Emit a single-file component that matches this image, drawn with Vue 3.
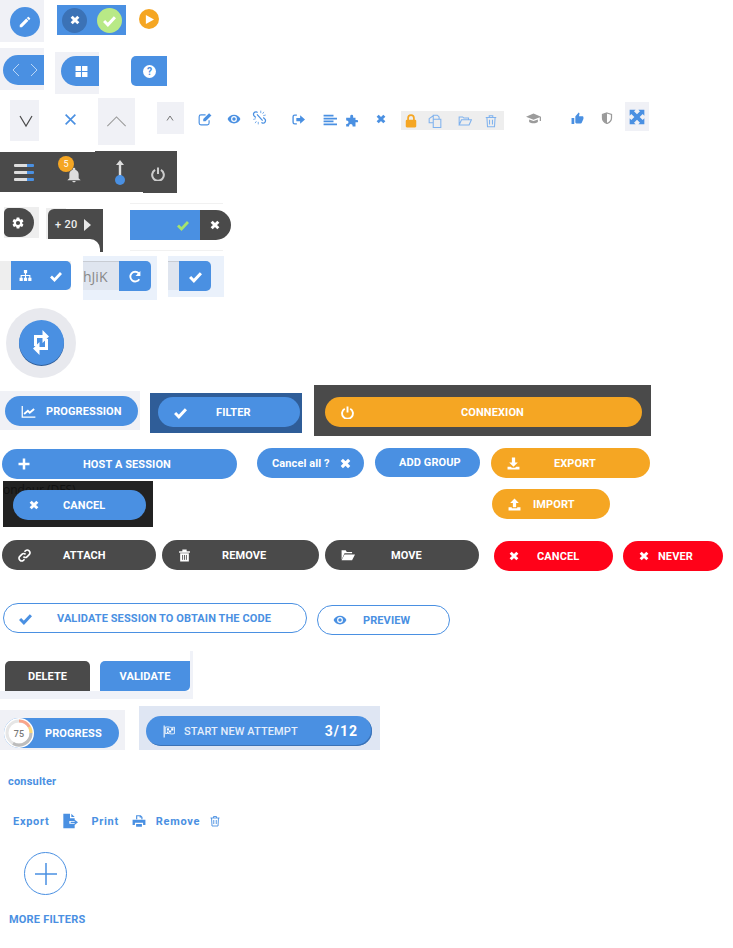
<script setup>
</script>

<template>
  <div class="page">
    <svg class="sprite" aria-hidden="true">
      <symbol id="pencil" viewBox="0 0 24 24"><path d="M3 17.25V21h3.75L17.81 9.94l-3.75-3.75L3 17.25zM20.71 7.04a1 1 0 000-1.41l-2.34-2.34a1 1 0 00-1.41 0l-1.83 1.83 3.75 3.75 1.83-1.83z"/></symbol>
      <symbol id="times" viewBox="0 0 24 24"><path d="M4 4l16 16M20 4L4 20" fill="none" stroke="currentColor" stroke-width="7"/></symbol>
      <symbol id="thin-x" viewBox="0 0 24 24"><path d="M3 3l18 18M21 3L3 21" fill="none" stroke="currentColor" stroke-width="3"/></symbol>
      <symbol id="check" viewBox="0 0 24 24"><path d="M2 13l7 7L22 6" fill="none" stroke="currentColor" stroke-width="5.5"/></symbol>
      <symbol id="plus" viewBox="0 0 24 24"><path d="M9.5 1h5v8.5H23v5h-8.5V23h-5v-8.5H1v-5h8.5z"/></symbol>
      <symbol id="grid" viewBox="0 0 24 24"><path d="M1 2h10v9H1zM13 2h10v9H13zM1 13h10v9H1zM13 13h10v9H13z"/></symbol>
      <symbol id="edit" viewBox="0 0 24 24"><path d="M19 14v5a3 3 0 01-3 3H5a3 3 0 01-3-3V8a3 3 0 013-3h8" fill="none" stroke="currentColor" stroke-width="2"/><path d="M9 12v4h4L23 6l-4-4z"/></symbol>
      <symbol id="eye" viewBox="0 0 24 24"><path d="M12 4.5C7 4.5 2.73 7.61 1 12c1.73 4.39 6 7.5 11 7.5s9.27-3.11 11-7.5c-1.73-4.39-6-7.5-11-7.5zM12 17a5 5 0 110-10 5 5 0 010 10zm0-8a3 3 0 100 6 3 3 0 000-6z"/></symbol>
      <symbol id="unlink" viewBox="0 0 24 24"><path d="M9 4l-2-1a4 4 0 00-4 6l3 3M15 20l2 1a4 4 0 004-6l-3-3M8 7l9 10" fill="none" stroke="currentColor" stroke-width="2"/><path d="M14 1v4M19 3l-2 3M22 8l-4 1M2 15l4-1M5 21l2-3M10 23v-4" fill="none" stroke="currentColor" stroke-width="1.2"/></symbol>
      <symbol id="signout" viewBox="0 0 24 24"><path d="M9 4H5a3 3 0 00-3 3v10a3 3 0 003 3h4" fill="none" stroke="currentColor" stroke-width="2.5"/><path d="M8 9h7V4l9 8-9 8v-5H8z"/></symbol>
      <symbol id="align" viewBox="0 0 24 24"><path d="M1 3h17v3H1zM1 8h23v3H1zM1 13h17v3H1zM1 18h23v3H1z"/></symbol>
      <symbol id="puzzle" viewBox="0 0 24 24"><path d="M20.5 12H18V8h-4V5.5a2.5 2.5 0 00-5 0V8H2v5h1a3 3 0 010 6H2v4h5v-1a3 3 0 016 0v1h5v-7h2.5a2 2 0 000-4z"/></symbol>
      <symbol id="lock" viewBox="0 0 24 24"><path d="M7 11V7a5 5 0 0110 0v4" fill="none" stroke="currentColor" stroke-width="3"/><rect x="3" y="10" width="18" height="13" rx="2"/></symbol>
      <symbol id="files" viewBox="0 0 24 24"><path d="M9 7V2h7l3 3v3M2 8l7-5v12H2zM9 9h13v14H9z" fill="none" stroke="currentColor" stroke-width="1.8"/></symbol>
      <symbol id="folder" viewBox="0 0 24 24"><path d="M2 19V5h6l2 2h8v3M2 19l4-9h17l-4 9z" fill="none" stroke="currentColor" stroke-width="1.8"/></symbol>
      <symbol id="trash" viewBox="0 0 24 24"><path d="M3 6h18M9 6V3h6v3M5 6l1 16h12l1-16M9.5 10v8M14.5 10v8" fill="none" stroke="currentColor" stroke-width="1.8"/></symbol>
      <symbol id="cap" viewBox="0 0 24 24"><path d="M12 4L0 9l12 5 10-4v6h2V9zM5 13.5v4c3 3 11 3 14 0v-4L12 16z"/></symbol>
      <symbol id="thumb" viewBox="0 0 24 24"><path d="M1 11h5v11H1zm22-1c0-1.100-.9-2-2-2h-6.310l.95-4.570.03-.32c0-.41-.17-.79-.44-1.060L14.170 1 8.590 7.590C8.220 7.950 8 8.450 8 9v10c0 1.100.9 2 2 2h8c.83 0 1.540-.5 1.840-1.220l3.020-7.050c.09-.23.14-.47.14-.73v-2z"/></symbol>
      <symbol id="shield" viewBox="0 0 24 24"><path d="M12 2l9 3v7c0 5-4 9-9 11-5-2-9-6-9-11V5z" fill="none" stroke="currentColor" stroke-width="2.5"/><path d="M12 2v21c-5-2-9-6-9-11V5z"/></symbol>
      <symbol id="expand" viewBox="0 0 24 24"><path d="M1 1h9L7.5 3.5 12 8l4.500-4.500L14 1h9v9l-2.500-2.500L16 12l4.500 4.500L23 14v9h-9l2.500-2.500L12 16l-4.500 4.500L10 23H1v-9l2.500 2.500L8 12 3.500 7.500 1 10z"/></symbol>
      <symbol id="bell" viewBox="0 0 24 24"><path d="M12 23c1.400 0 2.500-1 2.500-2h-5c0 1 1.100 2 2.500 2zm7-6v-6c0-3.500-2-6-5-7V3a2 2 0 00-4 0v1c-3 1-5 3.500-5 7v6l-3 3h20z"/></symbol>
      <symbol id="power" viewBox="0 0 24 24"><path d="M7 5a10 10 0 1010 0M12 1v11" fill="none" stroke="currentColor" stroke-width="3.5"/></symbol>
      <symbol id="gear" viewBox="0 0 24 24"><path d="M19.14 12.94c.04-.3.06-.61.06-.94 0-.32-.02-.64-.07-.94l2.03-1.58a.49.49 0 00.12-.61l-1.92-3.32a.488.488 0 00-.59-.22l-2.39.96c-.5-.38-1.03-.7-1.62-.94l-.36-2.54a.484.484 0 00-.48-.41h-3.84c-.24 0-.43.17-.47.41l-.36 2.54c-.59.24-1.13.57-1.62.94l-2.39-.96c-.22-.08-.47 0-.59.22L2.74 8.87c-.12.21-.08.47.12.61l2.03 1.58c-.05.3-.09.63-.09.94s.02.64.07.94l-2.03 1.58a.49.49 0 00-.12.61l1.92 3.32c.12.22.37.29.59.22l2.39-.96c.5.38 1.03.7 1.62.94l.36 2.54c.05.24.24.41.48.41h3.84c.24 0 .44-.17.47-.41l.36-2.54c.59-.24 1.13-.56 1.62-.94l2.39.96c.22.08.47 0 .59-.22l1.92-3.32c.12-.22.07-.47-.12-.61l-2.01-1.58zM12 15.6A3.6 3.6 0 1112 8.4a3.6 3.6 0 010 7.2z"/></symbol>
      <symbol id="sitemap" viewBox="0 0 24 24"><path d="M9 2h6v6H9zM1 16h6v6H1zM9 16h6v6H9zM17 16h6v6h-6zM11 8h2v3h8v5h-2v-3h-6v3h-2v-3H5v3H3v-5h8z"/></symbol>
      <symbol id="refresh" viewBox="0 0 24 24"><path d="M19 17a9 9 0 11-1-11" fill="none" stroke="currentColor" stroke-width="3.5"/><path d="M21 2v9h-9z"/></symbol>
      <symbol id="retweet" viewBox="0 0 16 25"><path d="M2.5 16V6.500H10M13.500 9v9.500H6" fill="none" stroke="currentColor" stroke-width="3"/><path d="M9.500 0L16 6.500 9.500 13zM6.500 12L0 18.500 6.500 25z"/></symbol>
      <symbol id="chart" viewBox="0 0 24 24"><path d="M2 3v18h21" fill="none" stroke="currentColor" stroke-width="2"/><path d="M5 16l6-5 3 3 7-6" fill="none" stroke="currentColor" stroke-width="3"/></symbol>
      <symbol id="download" viewBox="0 0 24 24"><path d="M9 1h6v9h5l-8 8-8-8h5zM1 18h6l2 2h6l2-2h6v5H1z"/></symbol>
      <symbol id="upload" viewBox="0 0 24 24"><path d="M12 1l8 8h-5v8H9V9H4zM1 17h6v2h10v-2h6v6H1z"/></symbol>
      <symbol id="link" viewBox="0 0 24 24"><path d="M10 14a5 5 0 007 0l4-4a5 5 0 00-7-7l-2 2M14 10a5 5 0 00-7 0l-4 4a5 5 0 007 7l2-2" fill="none" stroke="currentColor" stroke-width="3"/></symbol>
      <symbol id="trash-fill" viewBox="0 0 24 24"><path d="M2 4h6V1h8v3h6v3H2zM4 8h16v15H4z"/><path d="M8.500 11v9M12 11v9M15.500 11v9" stroke="#4a4a4a" stroke-width="1.6"/></symbol>
      <symbol id="folder-fill" viewBox="0 0 24 24"><path d="M1 20V4h7l2 3h9v2H6zM6 11h18l-5 10H1z"/></symbol>
      <symbol id="flag" viewBox="0 0 24 24"><path d="M4 1v22" stroke="currentColor" stroke-width="2"/><path d="M6 4c6-2 10 2 17 0v12c-7 2-11-2-17 0z" fill="none" stroke="currentColor" stroke-width="1.5"/><path d="M9 6h4v4H9zM17 6h4v4h-4zM13 10h4v4h-4zM9 12h3v3H9z"/></symbol>
      <symbol id="file-export" viewBox="0 0 24 24"><path d="M2 1h10v7h7v4H11v4h8v7H2zM14 1l5 5h-5zM13 13h6v-3l5 4-5 4v-3h-6z"/></symbol>
      <symbol id="print" viewBox="0 0 24 24"><path d="M7 9V2h8l3 3v4h-2V6h-3V4H9v5zM1 10h22v9h-4v-4H5v4H1zM7 17h10v5H7z"/></symbol>
    </svg>

    <!-- row 1 -->
    <div class="row r1">
      <div class="tile t-pencil"><span class="circle c-pencil"><svg class="i s14"><use href="#pencil" /></svg></span></div>
      <div class="t-toggle">
        <span class="circle c-dark"><svg class="i s10"><use href="#times" /></svg></span>
        <span class="circle c-green"><svg class="i s13"><use href="#check" /></svg></span>
      </div>
      <span class="circle c-play"><svg class="play" viewBox="0 0 10 10"><path d="M1 0l9 5-9 5z" /></svg></span>
    </div>

    <!-- row 2 -->
    <div class="row r2">
      <div class="tile t-nav">
        <div class="nav">
          <svg class="i s14 chev" viewBox="0 0 12 14"><path d="M9 1L3 7l6 6" /></svg>
          <svg class="i s14 chev" viewBox="0 0 12 14"><path d="M3 1l6 6-6 6" /></svg>
        </div>
      </div>
      <div class="tile t-grid"><div class="gridbtn"><svg class="i s13"><use href="#grid" /></svg></div></div>
      <div class="help">
        <svg class="i s13" viewBox="0 0 24 24"><circle cx="12" cy="12" r="12" fill="#fff" /><text x="12" y="18" text-anchor="middle" class="qm">?</text></svg>
      </div>
    </div>

    <!-- row 3 -->
    <div class="row r3">
      <div class="tile t-v"><svg class="vee" viewBox="0 0 14 14"><path d="M1 2l6 10 6-10" /></svg></div>
      <svg class="i s13 blue x-thin"><use href="#thin-x" /></svg>
      <div class="tile t-up"><svg class="upbig" viewBox="0 0 22 12"><path d="M1 11L11 1l10 10" /></svg></div>
      <div class="tile t-up2"><svg class="upsm" viewBox="0 0 8 6"><path d="M1 5.500L4 1l3 4.500" /></svg></div>
      <svg class="i s14 blue m-edit"><use href="#edit" /></svg>
      <svg class="i s14 blue m-eye"><use href="#eye" /></svg>
      <svg class="i s15 blue m-unlink"><use href="#unlink" /></svg>
      <svg class="i s13 blue m-signout"><use href="#signout" /></svg>
      <svg class="i s14 blue m-align"><use href="#align" /></svg>
      <svg class="i s14 blue m-puzzle"><use href="#puzzle" /></svg>
      <svg class="i s10 blue m-x"><use href="#times" /></svg>
      <div class="graybox">
        <svg class="i s14 orange g-lock"><use href="#lock" /></svg>
        <svg class="i s14 soft g-files"><use href="#files" /></svg>
        <svg class="i s14 soft g-folder"><use href="#folder" /></svg>
        <svg class="i s14 soft g-trash"><use href="#trash" /></svg>
      </div>
      <svg class="i s15 gray m-cap"><use href="#cap" /></svg>
      <svg class="i s13 blue m-thumb"><use href="#thumb" /></svg>
      <svg class="i s12 gray m-shield"><use href="#shield" /></svg>
      <div class="tile t-exp"><svg class="i s16 blue"><use href="#expand" /></svg></div>
    </div>

    <!-- row 4 -->
    <div class="row r4">
      <div class="dark seg1">
        <div class="menu"><i></i><i></i><i></i></div>
        <span class="badge">5</span>
        <svg class="i s16 bell"><use href="#bell" /></svg>
      </div>
      <div class="dark seg2">
        <svg class="temp" viewBox="0 0 12 26"><path d="M6 0l4 5H7.200v14H4.800V5H2z" fill="#ddd" /><circle cx="6" cy="20" r="5" fill="#4a90e2" /></svg>
      </div>
      <div class="dark seg3"><svg class="i s14 pw"><use href="#power" /></svg></div>
    </div>

    <!-- row 5 -->
    <div class="row r5">
      <div class="gear-tile"><div class="gear-btn"><svg class="i s14"><use href="#gear" /></svg></div></div>
      <div class="more-tile">
        <div class="more">
          <span class="more-t">+ 20</span>
          <span class="tri"></span>
          <span class="notch"></span>
        </div>
      </div>
      <div class="confirm">
        <div class="confirm-b"><svg class="i s12 lime"><use href="#check" /></svg></div>
        <div class="confirm-x"><svg class="i s10"><use href="#times" /></svg></div>
      </div>
    </div>

    <!-- row 6 -->
    <div class="row r6">
      <div class="g-site">
        <div class="site-b">
          <svg class="i s13"><use href="#sitemap" /></svg>
          <svg class="i s12"><use href="#check" /></svg>
        </div>
      </div>
      <div class="field-tile f1">
        <div class="field"><span class="field-t">hJiK</span></div>
        <div class="go"><svg class="i s13"><use href="#refresh" /></svg></div>
      </div>
      <div class="field-tile f2">
        <div class="field f-s"></div>
        <div class="go"><svg class="i s13"><use href="#check" /></svg></div>
      </div>
    </div>

    <!-- row 7 -->
    <div class="row r7">
      <div class="halo"><div class="round"><svg class="rt"><use href="#retweet" /></svg></div></div>
    </div>

    <!-- row 8 -->
    <div class="row r8">
      <div class="tile t-prog"><div class="pill b-prog"><svg class="i s15"><use href="#chart" /></svg><span>PROGRESSION</span></div></div>
      <div class="t-filter"><div class="pill b-filter"><svg class="i s13"><use href="#check" /></svg><span>FILTER</span></div></div>
      <div class="dark t-conn"><div class="pill or b-conn"><svg class="i s13"><use href="#power" /></svg><span>CONNEXION</span></div></div>
    </div>

    <!-- row 9 -->
    <div class="row r9">
      <div class="pill b-host"><svg class="i s12"><use href="#plus" /></svg><span>HOST A SESSION</span></div>
      <div class="pill b-all"><span>Cancel all ?</span><svg class="i s11"><use href="#times" /></svg></div>
      <div class="pill b-add"><span>ADD GROUP</span></div>
      <div class="pill or b-export"><svg class="i s13"><use href="#download" /></svg><span>EXPORT</span></div>
    </div>

    <!-- row 10 -->
    <div class="row r10">
      <div class="t-black">
        <span class="ghost">ondeur (DFS)</span>
        <div class="pill b-cancel"><svg class="i s10"><use href="#times" /></svg><span>CANCEL</span></div>
      </div>
      <div class="pill or b-import"><svg class="i s13"><use href="#upload" /></svg><span>IMPORT</span></div>
    </div>

    <!-- row 11 -->
    <div class="row r11">
      <div class="pill dk b-attach"><svg class="i s13"><use href="#link" /></svg><span>ATTACH</span></div>
      <div class="pill dk b-remove"><svg class="i s13"><use href="#trash-fill" /></svg><span>REMOVE</span></div>
      <div class="pill dk b-move"><svg class="i s14"><use href="#folder-fill" /></svg><span>MOVE</span></div>
      <div class="pill red b-red1"><svg class="i s10"><use href="#times" /></svg><span>CANCEL</span></div>
      <div class="pill red b-red2"><svg class="i s10"><use href="#times" /></svg><span>NEVER</span></div>
    </div>

    <!-- row 12 -->
    <div class="row r12">
      <div class="pill ol b-val"><svg class="i s13"><use href="#check" /></svg><span>VALIDATE SESSION TO OBTAIN THE CODE</span></div>
      <div class="pill ol b-prev"><svg class="i s14"><use href="#eye" /></svg><span>PREVIEW</span></div>
    </div>

    <!-- row 13 -->
    <div class="t-actions">
      <div class="act a-del">DELETE</div>
      <div class="act a-val">VALIDATE</div>
    </div>

    <!-- row 14 -->
    <div class="row r14">
      <div class="tile t-pg">
        <div class="pill b-pg">
          <svg class="ring" viewBox="0 0 32 32">
            <circle cx="16" cy="16" r="15" fill="#fff" />
            <circle cx="16" cy="16" r="12" fill="none" stroke="#e6e6e6" stroke-width="3" />
            <path d="M16 4A12 12 0 0126.500 10" fill="none" stroke="#f9a58a" stroke-width="3" />
            <path d="M26.500 10A12 12 0 0128 16" fill="none" stroke="#fbd775" stroke-width="3" />
            <path d="M28 16A12 12 0 0110 26.400" fill="none" stroke="#bdbdbd" stroke-width="3" />
            <text x="16" y="19.500" text-anchor="middle" class="ring-t">75</text>
          </svg>
          <span>PROGRESS</span>
        </div>
      </div>
      <div class="t-attempt">
        <div class="pill b-attempt">
          <svg class="i s13 fl"><use href="#flag" /></svg>
          <span class="att">START NEW ATTEMPT</span>
          <span class="cnt">3/12</span>
        </div>
      </div>
    </div>

    <div class="consulter">consulter</div>

    <div class="links">
      <span class="l-export">Export</span>
      <svg class="i s16 l-i1"><use href="#file-export" /></svg>
      <span class="l-print">Print</span>
      <svg class="i s14 l-i2"><use href="#print" /></svg>
      <span class="l-remove">Remove</span>
      <svg class="i s12 l-i3"><use href="#trash" /></svg>
    </div>

    <div class="addc"><svg class="plus" viewBox="0 0 22 22"><path d="M11 0v22M0 11h22" /></svg></div>

    <div class="moref">MORE FILTERS</div>
  </div>
</template>

<style>
html, body { margin: 0; background: #fff; }
</style>

<style scoped>
.page {
  width: 733px;
  height: 948px;
  overflow: hidden;
  background: #fff;
  font-family: Roboto, "Noto Sans", sans-serif;
  font-size: 11px;
  color: #4a90e2;
}
.sprite { display: none; }
.row { display: flex; align-items: flex-start; }
.i { fill: currentColor; flex: none; display: block; overflow: visible; }
.s10 { width: 10px; height: 10px; }
.s11 { width: 11px; height: 11px; }
.s12 { width: 12px; height: 12px; }
.s13 { width: 13px; height: 13px; }
.s14 { width: 14px; height: 14px; }
.s15 { width: 15px; height: 15px; }
.s16 { width: 16px; height: 16px; }
.blue { color: #4a90e2; }
.orange { color: #f5a623; }
.soft { color: #7fb2ee; }
.gray { color: #9b9b9b; }
.lime { color: #a5e36d; }
.tile { background: #f0f1f6; display: flex; flex: none; box-sizing: border-box; }
.dark { background: #4a4a4a; flex: none; }
.circle { display: flex; align-items: center; justify-content: center; border-radius: 50%; color: #fff; flex: none; }

/* row 1 */
.r1 { height: 48px; }
.t-pencil { width: 44px; height: 42px; padding: 7px 0 0 10px; }
.c-pencil { width: 30px; height: 30px; background: #4a90e2; }
.t-toggle { width: 69px; height: 30px; margin: 5px 0 0 13px; background: #4a90e2; display: flex; align-items: center; padding-left: 5px; gap: 10px; box-sizing: border-box; }
.c-dark { width: 25px; height: 25px; background: #3b72b6; }
.c-green { width: 25px; height: 25px; background: #b8e986; }
.c-play { width: 20px; height: 20px; margin: 9px 0 0 13px; background: #f5a623; }
.play { width: 9px; height: 9px; fill: #fff; margin-left: 1px; }

/* row 2 */
.r2 { height: 50px; }
.t-nav { width: 44px; height: 42px; padding: 7px 0 0 3px; }
.nav { width: 41px; height: 30px; background: #4a90e2; border-radius: 15px 0 0 15px; display: flex; align-items: center; padding-left: 6px; gap: 4px; box-sizing: border-box; color: #b9d6f6; }
.chev { fill: none; stroke: currentColor; stroke-width: 1; }
.t-grid { width: 44px; height: 42px; margin: 4px 0 0 11px; padding: 4px 0 0 6px; }
.gridbtn { width: 38px; height: 30px; background: #4a90e2; border-radius: 15px 0 0 15px; display: flex; align-items: center; justify-content: center; color: #fff; padding-left: 2px; box-sizing: border-box; }
.help { width: 36px; height: 30px; margin: 8px 0 0 32px; background: #4a90e2; border-radius: 5px 0 0 5px; display: flex; align-items: center; justify-content: center; }
.qm { font: 700 19px Roboto, sans-serif; fill: #4a90e2; }

/* row 3 */
.r3 { height: 53px; }
.t-v { width: 29px; height: 41px; margin: 2px 0 0 10px; align-items: center; justify-content: center; }
.vee { width: 14px; height: 14px; fill: none; stroke: #4a4a4a; stroke-width: 1.2; margin-left: 3px; }
.x-thin { margin: 15px 0 0 25px; }
.t-up { width: 37px; height: 47px; margin-left: 21px; align-items: center; justify-content: center; }
.upbig { width: 21px; height: 11px; fill: none; stroke: #9b9b9b; stroke-width: 1.2; }
.t-up2 { width: 27px; height: 32px; margin: 4px 0 0 22px; align-items: center; justify-content: center; }
.upsm { width: 8px; height: 6px; fill: none; stroke: #777; stroke-width: 1; margin-left: -1px; }
.m-edit { margin: 14px 0 0 14px; }
.m-eye { margin: 14px 0 0 15px; }
.m-unlink { margin: 12px 0 0 11px; }
.m-signout { margin: 15px 0 0 25px; }
.m-align { margin: 15px 0 0 18px; }
.m-puzzle { margin: 15px 0 0 8px; }
.m-x { margin: 16px 0 0 17px; }
.graybox { width: 103px; height: 19px; margin: 13px 0 0 15px; background: #eee; display: flex; align-items: center; flex: none; box-sizing: border-box; padding-left: 3px; }
.g-files { margin-left: 10px; }
.g-folder { margin-left: 16px; }
.g-trash { margin-left: 12px; }
.m-cap { margin: 13px 0 0 22px; }
.m-thumb { margin: 14px 0 0 30px; }
.m-shield { margin: 14px 0 0 17px; }
.t-exp { width: 24px; height: 29px; margin: 4px 0 0 12px; align-items: center; justify-content: center; }

/* row 4 */
.r4 { height: 52px; }
.seg1 { width: 95px; height: 40px; margin-top: 1px; position: relative; }
.menu { position: absolute; left: 14px; top: 12px; width: 20px; display: flex; flex-direction: column; gap: 4px; }
.menu i { display: block; height: 3px; background: linear-gradient(90deg, #ddd 65%, #4a90e2 65%); border-radius: 1px; }
.badge { position: absolute; left: 58px; top: 4px; width: 16px; height: 16px; border-radius: 50%; background: #f5a623; color: #fff; font-size: 9px; display: flex; align-items: center; justify-content: center; z-index: 1; }
.bell { position: absolute; left: 66px; top: 15px; color: #ddd; }
.seg2 { width: 48px; height: 41px; display: flex; justify-content: center; padding-top: 9px; box-sizing: border-box; }
.temp { width: 12px; height: 26px; margin-right: -1px; }
.seg3 { width: 34px; height: 42px; color: #ccc; display: flex; align-items: center; justify-content: center; padding: 3px 4px 0 0; box-sizing: border-box; }

/* row 5 */
.r5 { height: 53px; }
.gear-tile { width: 35px; height: 31px; margin: 4px 0 0 4px; background: #eee; padding-top: 1px; box-sizing: border-box; }
.gear-btn { width: 30px; height: 29px; background: #4a4a4a; color: #fff; border-radius: 5px 15px 15px 5px; display: flex; align-items: center; justify-content: center; padding-right: 2px; box-sizing: border-box; }
.more-tile { width: 57px; height: 31px; margin: 5px 0 0 7px; padding: 1px 0 0 2px; background: linear-gradient(#eee, #eee) no-repeat left top / 20px 100%; box-sizing: border-box; }
.more { width: 55px; height: 43px; background: #4a4a4a; border-radius: 6px 0 0 0; position: relative; display: flex; align-items: flex-start; padding: 9px 0 0 7px; box-sizing: border-box; color: #eee; }
.more-t { font-size: 11px; letter-spacing: .3px; line-height: 14px; font-weight: 500; }
.tri { width: 0; height: 0; border-left: 7px solid #e8e8e8; border-top: 6px solid transparent; border-bottom: 6px solid transparent; margin: 1px 0 0 6px; }
.notch { position: absolute; left: 0; top: 30px; width: 52px; height: 13px; background: #fff; border-radius: 0 10px 0 0; }
.confirm { width: 93px; height: 40px; margin-left: 27px; border-top: 1px solid #f1f1f1; border-bottom: 1px solid #f1f1f1; padding-top: 6px; display: flex; align-items: flex-start; flex: none; box-sizing: content-box; }
.confirm-b { width: 70px; height: 30px; background: #4a90e2; flex: none; display: flex; align-items: center; justify-content: flex-end; padding-right: 11px; box-sizing: border-box; }
.confirm-x { width: 31px; height: 30px; flex: none; background: #4a4a4a; color: #fff; border-radius: 0 15px 15px 0; display: flex; align-items: center; justify-content: center; padding-right: 2px; box-sizing: border-box; }

/* row 6 */
.r6 { height: 50px; }
.g-site { width: 71px; height: 29px; margin-top: 5px; background: #eee; flex: none; padding-left: 11px; box-sizing: border-box; }
.site-b { width: 60px; height: 29px; background: #4a90e2; color: #fff; border-radius: 0 5px 5px 0; display: flex; align-items: center; padding: 0 9px 0 8px; justify-content: space-between; box-sizing: border-box; }
.field-tile { background: #eaf1fb; display: flex; align-items: flex-start; padding-top: 5px; box-sizing: border-box; flex: none; }
.f1 { width: 74px; height: 44px; margin-left: 12px; }
.f2 { width: 56px; height: 41px; margin-left: 11px; }
.field { width: 36px; height: 29px; background: #dfe5ef; border-top: 1px solid #c8ccd3; box-sizing: border-box; overflow: hidden; display: flex; align-items: center; }
.f-s { width: 11px; }
.field-t { color: #888; font: 14px "Open Sans", sans-serif; }
.go { width: 32px; height: 30px; background: #4a90e2; color: #fff; border-radius: 0 5px 5px 0; display: flex; align-items: center; justify-content: center; }

/* row 7 */
.r7 { height: 79px; }
.halo { width: 70px; height: 70px; margin: 2px 0 0 6px; background: #e8e9ee; border-radius: 50%; display: flex; align-items: center; justify-content: center; flex: none; }
.round { width: 45px; height: 45px; background: #4a90e2; border-radius: 50%; box-shadow: 0 1px 0 #2f5d98; color: #fff; display: flex; align-items: center; justify-content: center; margin-top: -1px; }
.rt { width: 16px; height: 25px; fill: currentColor; display: block; }

/* pills */
.pill { height: 30px; border-radius: 15px; background: #4a90e2; color: #fff; display: flex; align-items: center; box-sizing: border-box; flex: none; font-weight: 700; font-size: 11px; letter-spacing: .1px; white-space: nowrap; }
.or { background: #f5a623; }
.dk { background: #4a4a4a; }
.red { background: #ff0219; }
.ol { background: #fff; color: #4a90e2; border: 1px solid #4a90e2; }

/* row 8 */
.r8 { height: 61px; }
.t-prog { width: 140px; height: 39px; margin-top: 6px; padding: 5px 0 0 5px; }
.b-prog { width: 133px; padding-left: 16px; }
.b-prog span { margin-left: 10px; }
.t-filter { width: 152px; height: 40px; margin: 8px 0 0 10px; background: #2f5d98; padding: 4px 0 0 8px; box-sizing: border-box; flex: none; }
.b-filter { width: 142px; padding-left: 16px; }
.b-filter span { margin-left: 29px; }
.t-conn { width: 337px; height: 51px; margin-left: 12px; padding: 12px 0 0 11px; box-sizing: border-box; }
.b-conn { width: 317px; padding-left: 16px; }
.b-conn span { margin-left: 107px; }

/* row 9 */
.r9 { height: 31px; margin-top: 2px; }
.b-host { width: 235px; margin: 1px 0 0 2px; padding-left: 16px; }
.b-host span { margin-left: 53px; }
.b-all { width: 107px; margin-left: 20px; padding-left: 15px; }
.b-all .i { margin-left: 10px; }
.b-add { width: 105px; height: 29px; margin-left: 11px; padding-left: 24px; }
.b-export { width: 159px; margin-left: 11px; padding-left: 16px; }
.b-export span { margin-left: 34px; }

/* row 10 */
.r10 { height: 51px; }
.t-black { width: 150px; height: 46px; margin: 2px 0 0 3px; background: #222; padding: 9px 0 0 10px; box-sizing: border-box; position: relative; overflow: hidden; flex: none; }
.ghost { position: absolute; left: 0; top: 0; color: #111; font: 12px "Open Sans", sans-serif; }
.b-cancel { width: 133px; padding-left: 16px; position: relative; }
.b-cancel span { margin-left: 24px; }
.b-import { width: 118px; margin: 10px 0 0 339px; padding-left: 16px; }
.b-import span { margin-left: 12px; }

/* row 11 */
.r11 { height: 60px; padding-top: 10px; box-sizing: border-box; }
.b-attach { width: 154px; margin-left: 2px; padding-left: 16px; }
.b-attach span { margin-left: 32px; }
.b-remove { width: 157px; margin-left: 6px; padding-left: 16px; }
.b-remove span { margin-left: 31px; }
.b-move { width: 154px; margin-left: 6px; padding-left: 16px; }
.b-move span { margin-left: 36px; }
.b-red1 { width: 119px; margin: 1px 0 0 15px; padding-left: 15px; }
.b-red1 span { margin-left: 18px; }
.b-red2 { width: 100px; margin: 1px 0 0 10px; padding-left: 16px; }
.b-red2 span { margin-left: 9px; }

/* row 12 */
.r12 { height: 61px; padding-top: 13px; box-sizing: border-box; }
.b-val { width: 304px; margin-left: 3px; padding-left: 15px; }
.b-val span { margin-left: 25px; }
.b-prev { width: 133px; margin: 2px 0 0 10px; padding-left: 15px; }
.b-prev span { margin-left: 16px; }

/* row 13 */
.t-actions { width: 193px; height: 48px; border-right: 3px solid #f0f2f8; border-bottom: 8px solid #f0f2f8; box-sizing: border-box; padding: 10px 0 0 5px; display: flex; gap: 10px; }
.act { height: 30px; color: #fff; font-weight: 700; font-size: 11px; letter-spacing: .1px; display: flex; align-items: center; justify-content: center; flex: none; box-sizing: border-box; }
.a-del { width: 85px; background: #4a4a4a; border-radius: 5px 5px 0 0; }
.a-val { width: 90px; background: #4a90e2; border-radius: 5px 0 5px 0; }

/* row 14 */
.r14 { height: 51px; margin-top: 7px; }
.t-pg { width: 125px; height: 40px; margin-top: 4px; padding: 8px 0 0 4px; }
.b-pg { width: 115px; position: relative; padding-left: 41px; }
.ring { position: absolute; left: -1px; top: -1px; width: 32px; height: 32px; }
.ring-t { font: 500 9px Roboto, sans-serif; fill: #777; }
.t-attempt { width: 241px; height: 44px; margin-left: 14px; background: #dfe6f3; padding: 10px 0 0 7px; box-sizing: border-box; flex: none; }
.b-attempt { width: 226px; padding-left: 16px; box-shadow: inset -1px -1px 0 #3b72b6; }
.att { margin-left: 9px; font-weight: 500; color: #e4eefb; }
.cnt { margin-left: 27px; font-size: 14px; letter-spacing: 1px; }

/* bottom */
.consulter { margin: 18px 0 0 8px; line-height: 14px; font-weight: 700; font-size: 11px; letter-spacing: .2px; }
.links { display: flex; align-items: center; margin: 24px 0 0 13px; height: 16px; font-weight: 700; font-size: 11px; letter-spacing: .7px; }
.l-i1 { margin-left: 13px; }
.l-print { margin-left: 13px; }
.l-i2 { margin-left: 13px; }
.l-remove { margin-left: 10px; }
.l-i3 { margin-left: 9px; }
.addc { width: 41px; height: 41px; margin: 23px 0 0 24px; border: 1px solid #4a90e2; border-radius: 50%; display: flex; align-items: center; justify-content: center; box-sizing: content-box; }
.plus { width: 22px; height: 22px; fill: none; stroke: #4a90e2; stroke-width: 1.5; }
.moref { margin: 18px 0 0 9px; line-height: 14px; font-weight: 700; font-size: 11px; letter-spacing: .2px; }
</style>
